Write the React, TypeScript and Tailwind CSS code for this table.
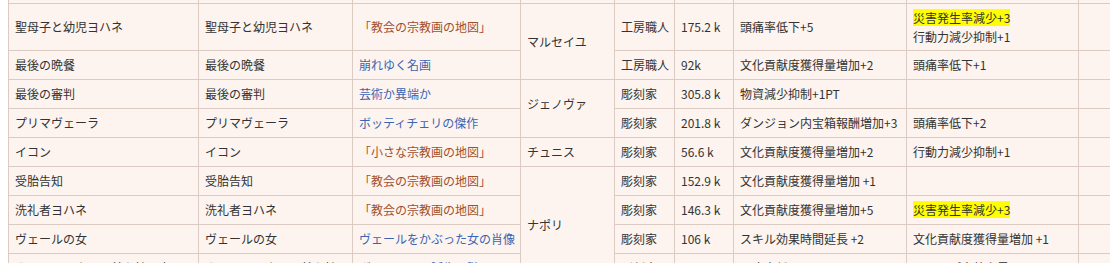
import { FC, ReactNode } from 'react'

type Tone = 'brown' | 'blue'

const Link: FC<{ tone: Tone; children: ReactNode }> = ({ tone, children }) => (
	<span className={tone === 'brown' ? 'text-[#9e4f2e]' : 'text-[#3c64b1]'}>{children}</span>
)

const Mark: FC<{ children: ReactNode }> = ({ children }) => <span className="bg-[#ffff00]">{children}</span>

const td = 'border border-[#dccbc2] px-[6px] py-[4px] align-middle whitespace-nowrap overflow-hidden'

const App: FC = () => {
	return (
		<div className="w-[1110px] h-[263px] overflow-hidden bg-white">
			<table
				className="ml-[8px] -mt-[26px] table-fixed border-collapse bg-[#fdf4ef] text-[12px] leading-[20px] text-[#333333]"
				style={{ fontFamily: '"Noto Sans CJK JP", "Noto Sans", sans-serif', width: 1190 }}
			>
				<colgroup>
					<col className="w-[190px]" />
					<col className="w-[154px]" />
					<col className="w-[168px]" />
					<col className="w-[94px]" />
					<col className="w-[60px]" />
					<col className="w-[59px]" />
					<col className="w-[173px]" />
					<col className="w-[172px]" />
					<col className="w-[120px]" />
				</colgroup>
				<tbody>
					<tr>
						<td className={td}>&nbsp;</td>
						<td className={td}></td>
						<td className={td}></td>
						<td className={td}></td>
						<td className={td}></td>
						<td className={td}></td>
						<td className={td}></td>
						<td className={td}></td>
						<td className={td}></td>
					</tr>
					<tr>
						<td className={td}>聖母子と幼児ヨハネ</td>
						<td className={td}>聖母子と幼児ヨハネ</td>
						<td className={td}>
							<Link tone="brown">「教会の宗教画の地図」</Link>
						</td>
						<td className={td} rowSpan={2}>
							マルセイユ
						</td>
						<td className={td}>工房職人</td>
						<td className={td}>175.2 k</td>
						<td className={td}>頭痛率低下+5</td>
						<td className={`${td} leading-[19px]`}>
							<Mark>災害発生率減少+3</Mark>
							<br />
							行動力減少抑制+1
						</td>
						<td className={td}></td>
					</tr>
					<tr>
						<td className={td}>最後の晩餐</td>
						<td className={td}>最後の晩餐</td>
						<td className={td}>
							<Link tone="blue">崩れゆく名画</Link>
						</td>
						<td className={td}>工房職人</td>
						<td className={td}>92k</td>
						<td className={td}>文化貢献度獲得量増加+2</td>
						<td className={td}>頭痛率低下+1</td>
						<td className={td}></td>
					</tr>
					<tr>
						<td className={td}>最後の審判</td>
						<td className={td}>最後の審判</td>
						<td className={td}>
							<Link tone="blue">芸術か異端か</Link>
						</td>
						<td className={`${td} pb-[14px]`} rowSpan={2}>
							ジェノヴァ
						</td>
						<td className={td}>彫刻家</td>
						<td className={td}>305.8 k</td>
						<td className={td}>物資減少抑制+1PT</td>
						<td className={td}></td>
						<td className={td}></td>
					</tr>
					<tr>
						<td className={td}>プリマヴェーラ</td>
						<td className={td}>プリマヴェーラ</td>
						<td className={td}>
							<Link tone="blue">ボッティチェリの傑作</Link>
						</td>
						<td className={td}>彫刻家</td>
						<td className={td}>201.8 k</td>
						<td className={td}>ダンジョン内宝箱報酬増加+3</td>
						<td className={td}>頭痛率低下+2</td>
						<td className={td}></td>
					</tr>
					<tr>
						<td className={td}>イコン</td>
						<td className={td}>イコン</td>
						<td className={td}>
							<Link tone="brown">「小さな宗教画の地図」</Link>
						</td>
						<td className={td}>チュニス</td>
						<td className={td}>彫刻家</td>
						<td className={td}>56.6 k</td>
						<td className={td}>文化貢献度獲得量増加+2</td>
						<td className={td}>行動力減少抑制+1</td>
						<td className={td}></td>
					</tr>
					<tr>
						<td className={td}>受胎告知</td>
						<td className={td}>受胎告知</td>
						<td className={td}>
							<Link tone="brown">「教会の宗教画の地図」</Link>
						</td>
						<td className={td} rowSpan={4}>
							ナポリ
						</td>
						<td className={td}>彫刻家</td>
						<td className={td}>152.9 k</td>
						<td className={td}>文化貢献度獲得量増加 +1</td>
						<td className={td}></td>
						<td className={td}></td>
					</tr>
					<tr>
						<td className={td}>洗礼者ヨハネ</td>
						<td className={td}>洗礼者ヨハネ</td>
						<td className={td}>
							<Link tone="brown">「教会の宗教画の地図」</Link>
						</td>
						<td className={td}>彫刻家</td>
						<td className={td}>146.3 k</td>
						<td className={td}>文化貢献度獲得量増加+5</td>
						<td className={td}>
							<Mark>災害発生率減少+3</Mark>
						</td>
						<td className={td}></td>
					</tr>
					<tr>
						<td className={td}>ヴェールの女</td>
						<td className={td}>ヴェールの女</td>
						<td className={td}>
							<Link tone="blue">ヴェールをかぶった女の肖像</Link>
						</td>
						<td className={td}>彫刻家</td>
						<td className={td}>106 k</td>
						<td className={td}>スキル効果時間延長 +2</td>
						<td className={td}>文化貢献度獲得量増加 +1</td>
						<td className={td}></td>
					</tr>
					<tr>
						<td className={td}>ホロフェルネスの首を持つ女</td>
						<td className={td}>ホロフェルネスの首を持つ女</td>
						<td className={td}>
							<Link tone="blue">ヴィーナスの誕生の謎</Link>
						</td>
						<td className={td}>彫刻家</td>
						<td className={td}>98.4 k</td>
						<td className={td}>頭痛率低下+3</td>
						<td className={td}>ショップ売値上昇+1</td>
						<td className={td}></td>
					</tr>
				</tbody>
			</table>
		</div>
	)
}

export default App
